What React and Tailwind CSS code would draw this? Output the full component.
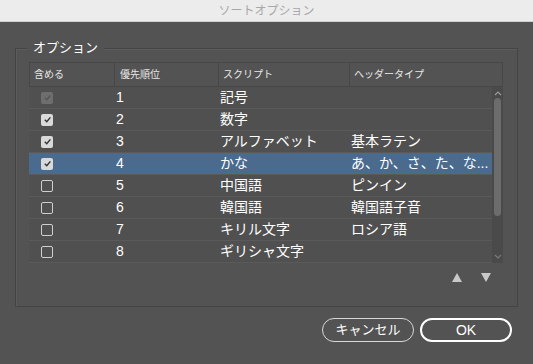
import React from "react";

const rows = [
  { n: "1", script: "記号", type: "", state: "disabled" },
  { n: "2", script: "数字", type: "", state: "checked" },
  { n: "3", script: "アルファベット", type: "基本ラテン", state: "checked" },
  { n: "4", script: "かな", type: "あ、か、さ、た、な...", state: "checked", selected: true },
  { n: "5", script: "中国語", type: "ピンイン", state: "off" },
  { n: "6", script: "韓国語", type: "韓国語子音", state: "off" },
  { n: "7", script: "キリル文字", type: "ロシア語", state: "off" },
  { n: "8", script: "ギリシャ文字", type: "", state: "off" },
];

const Check = ({ state }) => {
  if (state === "off") {
    return <div className="w-[12px] h-[12px] border border-[#cfcfcf] rounded-[2px]" />;
  }
  const disabled = state === "disabled";
  return (
    <div
      className={`w-[12px] h-[12px] rounded-[2px] flex items-center justify-center ${
        disabled ? "bg-[#6e6e6e]" : "bg-[#d9d9d9]"
      }`}
    >
      <svg width="9" height="9" viewBox="0 0 10 10">
        <path
          d="M2 5.2 L4.2 7.4 L8.2 2.6"
          fill="none"
          stroke={disabled ? "#555555" : "#333333"}
          strokeWidth="1.6"
        />
      </svg>
    </div>
  );
};

const App = () => {
  return (
    <div
      className="w-[533px] h-[364px] bg-[#535353] flex flex-col overflow-hidden"
      style={{ fontFamily: '"Liberation Sans", "Noto Sans CJK JP", sans-serif' }}
    >
      {/* Title bar */}
      <div className="h-[22px] shrink-0 bg-[#ececec] border-b border-[#d0d0d0] flex items-center justify-center text-[12px] text-[#a8a8a8]">
        ソートオプション
      </div>

      {/* Options group */}
      <div className="relative mt-[26px] ml-[15px] w-[503px] h-[259px] border border-[#444444] shadow-[inset_1px_1px_0_#5c5c5c]">
        <div className="absolute left-[11px] top-[-10px] px-[6px] bg-[#535353] text-[13px] leading-[18px] text-white">
          オプション
        </div>

        <div className="ml-[13px] mt-[13px] w-[474px]">
          {/* Header */}
          <div className="h-[25px] flex border border-[#474747] text-[10px] text-[#e8e8e8]">
            <div className="w-[85px] flex items-center pl-[4px] border-r border-[#474747]">含める</div>
            <div className="w-[104px] flex items-center pl-[5px] border-r border-[#474747]">優先順位</div>
            <div className="w-[131px] flex items-center pl-[4px] border-r border-[#474747]">スクリプト</div>
            <div className="flex-1 flex items-center pl-[4px]">ヘッダータイプ</div>
          </div>

          {/* Body */}
          <div className="flex h-[176px] bg-[#4b4b4b]">
            <div className="flex-1 flex flex-col">
              {rows.map((r) => (
                <div
                  key={r.n}
                  className={`h-[22px] flex items-center border-b border-[#5a5a5a] text-[14px] text-white ${
                    r.selected ? "bg-[#4a6a8e]" : "bg-[#505050]"
                  }`}
                >
                  <div className="w-[85px] pl-[12px] flex items-center">
                    <Check state={r.state} />
                  </div>
                  <div className="w-[104px] pl-[2px]">{r.n}</div>
                  <div className="w-[131px] pl-[2px]">{r.script}</div>
                  <div className="flex-1 pl-[2px] whitespace-nowrap">{r.type}</div>
                </div>
              ))}
            </div>

            {/* Scrollbar */}
            <div className="w-[11px] bg-[#4a4a4a] flex flex-col items-center">
              <svg width="8" height="6" viewBox="0 0 8 6" className="mt-[3px]">
                <path d="M1 5 L4 2 L7 5" fill="none" stroke="#9a9a9a" strokeWidth="1.2" />
              </svg>
              <div className="mt-[2px] w-[7px] h-[118px] rounded-full bg-[#6c6c6c]" />
              <div className="flex-1" />
              <svg width="8" height="6" viewBox="0 0 8 6" className="mb-[3px]">
                <path d="M1 1 L4 4 L7 1" fill="none" stroke="#7a7a7a" strokeWidth="1.2" />
              </svg>
            </div>
          </div>

          {/* Move buttons */}
          <div className="flex justify-end gap-[19px] pr-[12px] mt-[10px]">
            <svg width="10" height="9" viewBox="0 0 10 9">
              <path d="M5 0 L10 9 L0 9 Z" fill="#c8c8c8" />
            </svg>
            <svg width="10" height="9" viewBox="0 0 10 9">
              <path d="M0 0 L10 0 L5 9 Z" fill="#c8c8c8" />
            </svg>
          </div>
        </div>
      </div>

      {/* Dialog buttons */}
      <div className="flex justify-end gap-[6px] mt-[11px] pr-[21px]">
        <button className="w-[92px] h-[24px] rounded-full border-[1.5px] border-[#d8d8d8] text-[13px] text-white flex items-center justify-center">
          キャンセル
        </button>
        <button className="w-[92px] h-[24px] rounded-full border-2 border-white text-[14px] text-white flex items-center justify-center">
          OK
        </button>
      </div>
    </div>
  );
};

export default App;
